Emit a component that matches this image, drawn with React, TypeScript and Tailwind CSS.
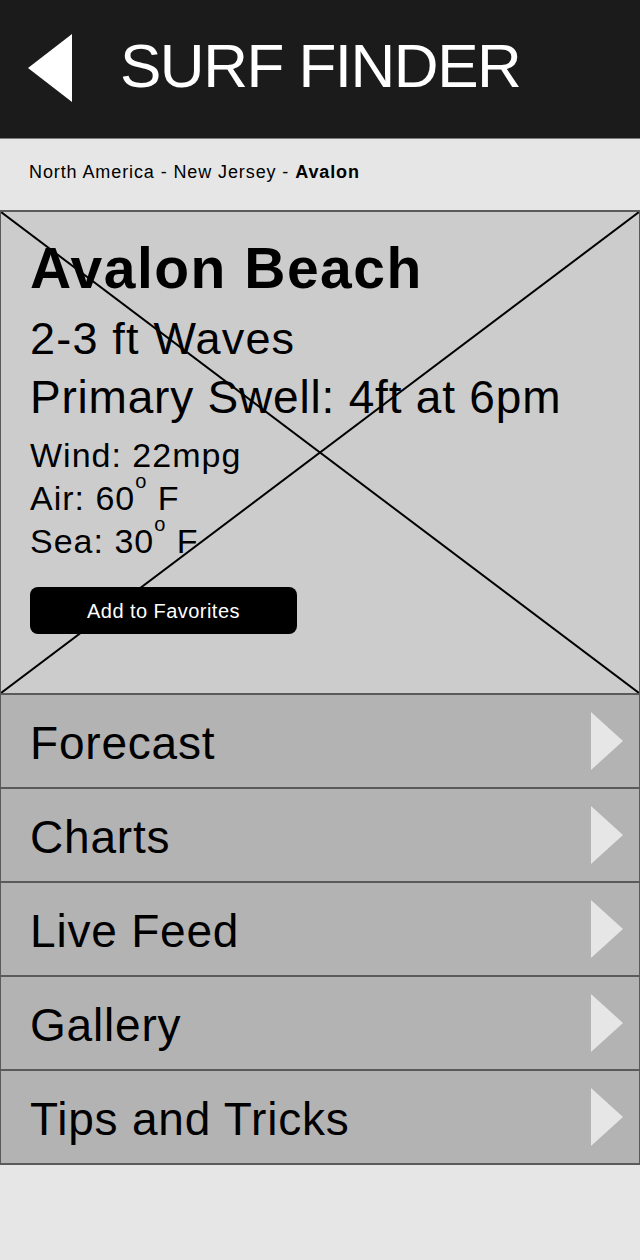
import { ReactNode } from 'react';

const menu = ['Forecast', 'Charts', 'Live Feed', 'Gallery', 'Tips and Tricks'];

function Deg() {
    return <span className="relative -top-[22px] text-[20px] leading-none">o</span>;
}

function MenuRow({ label }: { label: string }) {
    return (
        <div className="flex h-[94px] items-center justify-between border-b-2 border-x border-[#5a5a5a] bg-[#b3b3b3] pl-[29px] pr-[16px]">
            <span className="pt-1 text-[46px] leading-none tracking-[0.8px] text-black">{label}</span>
            <svg width="32" height="58" viewBox="0 0 32 58">
                <polygon points="0,0 32,29 0,58" fill="#e6e6e6" />
            </svg>
        </div>
    );
}

function InfoLine({ children }: { children: ReactNode }) {
    return <div className="text-[34px] leading-[43px] tracking-[1px]">{children}</div>;
}

export default function App() {
    return (
        <div className="min-h-[1260px] bg-[#e6e6e6] font-['Liberation_Sans',Arial,sans-serif] text-black">
            <header className="flex h-[139px] items-center border-b border-[#7a7a7a] bg-[#1b1b1b] pl-[28px]">
                <svg width="44" height="68" viewBox="0 0 44 68" className="mb-[2px]">
                    <polygon points="0,34 44,0 44,68" fill="#ffffff" />
                </svg>
                <h1 className="ml-[48px] pb-[6px] text-[62px] leading-none tracking-[-1.5px] text-white">SURF FINDER</h1>
            </header>

            <div className="flex h-[71px] items-center pb-[5px] pl-[29px] text-[18px] leading-none tracking-[0.9px]">
                <span>
                    North America - New Jersey - <b>Avalon</b>
                </span>
            </div>

            <section className="relative h-[485px] border-y-2 border-x border-[#5a5a5a] bg-[#cccccc]">
                <svg
                    className="absolute inset-0 h-full w-full"
                    viewBox="0 0 640 485"
                    preserveAspectRatio="none"
                >
                    <line x1="0" y1="0" x2="640" y2="485" stroke="#000" strokeWidth="2" />
                    <line x1="640" y1="0" x2="0" y2="485" stroke="#000" strokeWidth="2" />
                </svg>
                <div className="relative pl-[29px] pt-[23px]">
                    <h2 className="text-[57px] font-bold leading-[66px] tracking-[1.5px]">Avalon Beach</h2>
                    <p className="mt-[9px] text-[45px] leading-[58px] tracking-[1.2px]">2-3 ft Waves</p>
                    <p className="text-[46px] leading-[58px] tracking-[0.8px]">Primary Swell: 4ft at 6pm</p>
                    <div className="mt-[8px]">
                        <InfoLine>Wind: 22mpg</InfoLine>
                        <InfoLine>
                            Air: 60<Deg /> F
                        </InfoLine>
                        <InfoLine>
                            Sea: 30<Deg /> F
                        </InfoLine>
                    </div>
                    <button className="mt-[24px] h-[47px] w-[267px] rounded-lg bg-black text-[20px] tracking-[0.45px] text-white">
                        Add to Favorites
                    </button>
                </div>
            </section>

            <nav>
                {menu.map((m) => (
                    <MenuRow key={m} label={m} />
                ))}
            </nav>
        </div>
    );
}
